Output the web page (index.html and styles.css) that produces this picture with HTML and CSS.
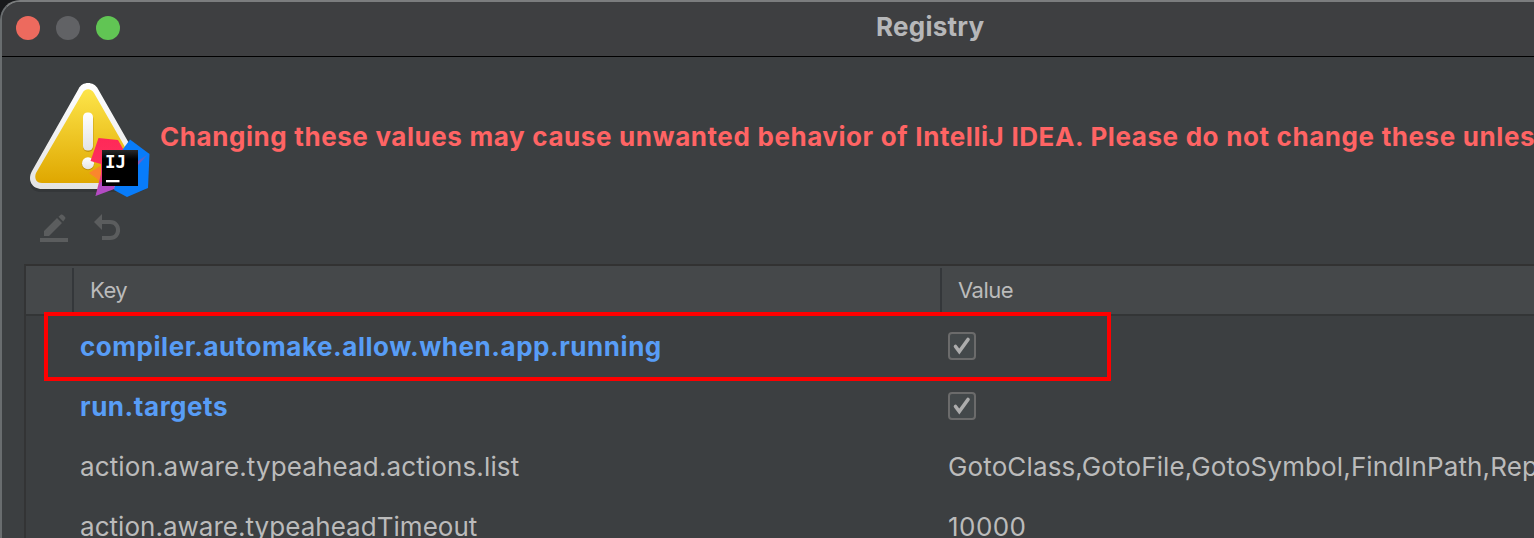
FILE: index.html
```html
<!DOCTYPE html>
<html lang="en">
<head>
<meta charset="utf-8">
<title>Registry</title>
<link rel="stylesheet" href="styles.css">
</head>
<body>
<div class="window">
  <header class="titlebar">
    <div class="lights"><span class="light close"></span><span class="light minimize"></span><span class="light expand"></span></div>
    <h1 class="title">Registry</h1>
  </header>
  <div class="warning">
    <svg class="warning-icon" width="128" height="128" viewBox="0 0 128 128">
      <defs>
        <linearGradient id="yellow" x1="0" y1="0" x2="0" y2="1"><stop offset="0" stop-color="#fde54a"/><stop offset="1" stop-color="#dfa700"/></linearGradient>
        <linearGradient id="white" x1="0" y1="0" x2="0" y2="1"><stop offset="0" stop-color="#fff"/><stop offset="1" stop-color="#e3e3e3"/></linearGradient>
        <linearGradient id="pink" x1="0" y1="0" x2="0" y2="1"><stop offset="0" stop-color="#ff2858"/><stop offset=".5" stop-color="#fe315d"/><stop offset="1" stop-color="#b34bc4"/></linearGradient>
        <linearGradient id="box" x1="0" y1="0" x2="0" y2="1"><stop offset="0" stop-color="#292929"/><stop offset=".25" stop-color="#000"/></linearGradient>
        <linearGradient id="facet" x1="0" y1="1" x2="1" y2="0"><stop offset="0" stop-color="#9851aa"/><stop offset="1" stop-color="#087cfa"/></linearGradient>
      </defs>
      <path class="triangle-shadow" d="M57 10 Q64-1 71 10L123 97Q127 110 113 111H15Q3 109 7 95Z" transform="translate(0 2)"/>
      <path d="M54.500 10C58 2 70 2 74 10L122 94C127 103 121 110 113 110H18C8 110 3 101 8 92Z" fill="url(#white)"/>
      <path d="M58.500 14C61 9 67 9 70 14L117 96C119 100 117 104 112 104H18C12 104 10 99 12 94Z" fill="url(#yellow)"/>
      <rect class="mark-shadow" x="59" y="35" width="10.500" height="38" rx="5"/>
      <rect x="59" y="33.500" width="10" height="38" rx="4.500" fill="url(#white)"/>
      <ellipse class="mark-shadow" cx="64" cy="85.300" rx="6.200" ry="6"/>
      <circle cx="64" cy="84.300" r="6" fill="url(#white)"/>
      <path d="M65 94L76 87L79 106L72 99Z" fill="#fb862d"/>
      <path d="M74.500 59L94 61L102 75L80 98V106L71.500 117L77 95V85L66.500 82Z" fill="url(#pink)"/>
      <path d="M77 103L86 104L93 109L71.500 117Z" fill="#b34bc4"/>
      <path d="M106 60.500L125.500 75L124 109L103 118L90 111L99 70Z" fill="#087cfa"/>
      <path d="M125.500 74L114 82V86Z" fill="url(#facet)"/>
      <rect x="78" y="71" width="36" height="36" fill="url(#box)"/>
      <text class="logo-text" x="81" y="88.500" textLength="21" lengthAdjust="spacingAndGlyphs">IJ</text>
      <rect x="82" y="101" width="13.500" height="2.300" fill="#fff"/>
    </svg>
    <p class="warning-text">Changing these values may cause unwanted behavior of IntelliJ IDEA. Please do not change these unless</p>
  </div>
  <div class="toolbar">
    <svg width="28" height="28" viewBox="0 0 28 28"><path d="M0 24H28V28H0ZM4 17V22H9L22 9L17 4ZM18.500 2.700L21 .6Q22 0 23 1L25 3Q26 4 25 5L23.200 7.400Z"/></svg>
    <svg width="28" height="28" viewBox="0 0 28 28"><path d="M0 8L8 0V6H16C29.500 6 29.500 26 16 26H8V22H16C24 22 24 10 16 10H8V16Z"/></svg>
  </div>
  <div class="table">
    <div class="row head"><div class="cell"></div><div class="cell">Key</div><div class="cell">Value</div></div>
    <div class="row changed"><div class="key">compiler.automake.allow.when.app.running</div><div class="value"><span class="check"><svg width="28" height="28" viewBox="0 0 28 28"><path d="M7.500 14.500L11.300 19.500L20 7.500"/></svg></span></div></div>
    <div class="row changed"><div class="key">run.targets</div><div class="value"><span class="check"><svg width="28" height="28" viewBox="0 0 28 28"><path d="M7.500 14.500L11.300 19.500L20 7.500"/></svg></span></div></div>
    <div class="row listing"><div class="key">action.aware.typeahead.actions.list</div><div class="value">GotoClass,GotoFile,GotoSymbol,FindInPath,ReplaceInPath</div></div>
    <div class="row"><div class="key">action.aware.typeaheadTimeout</div><div class="value number">10000</div></div>
  </div>
</div>
<div class="highlight"></div>
</body>
</html>
```
FILE: styles.css
```css
* { box-sizing: border-box; }
html, body { height: 538px; margin: 0; overflow: hidden; }
body { background: #18191b; font-family: Inter, "Noto Sans", sans-serif; color: #bbb; }
.window { height: 560px; border-top: 2px solid #7b7d7e; border-left: 2px solid #696d6f; border-top-left-radius: 20px; background: #3c3f41; overflow: hidden; }
.titlebar { display: grid; grid-template-columns: 326px 1fr; height: 55px; background: #3e3f41; border-bottom: 1px solid #000; }
.lights { display: flex; gap: 16px; padding: 14px 0 0 14px; }
.light { width: 24px; height: 24px; border-radius: 50%; }
.close { background: #ed6a5e; }
.minimize { background: #616265; }
.expand { background: #61c554; }
.title { margin: 0; padding-left: 548px; font-size: 26px; line-height: 50px; font-weight: 700; letter-spacing: .25px; color: #b6b7b9; }
.warning { display: flex; height: 145px; padding: 23px 0 0 22px; }
.warning-icon { flex: none; display: block; margin-top: -1px; }
.triangle-shadow { fill: #25272a; opacity: .35; }
.mark-shadow { fill: #a87c0c; opacity: .6; }
.logo-text { font: bold 18px "DejaVu Sans Mono", monospace; fill: #fff; }
.warning-text { margin: 0; padding: 37px 0 0 8px; font-size: 26px; line-height: 40px; font-weight: 700; letter-spacing: .55px; word-spacing: .4px; color: #ff6464; white-space: nowrap; }
.toolbar { display: flex; gap: 26px; height: 62px; padding: 12px 0 0 38px; fill: #5b5d5e; }
.table { margin-left: 22px; border-left: 2px solid #333435; border-top: 2px solid #323232; }
.row { display: grid; grid-template-columns: 914px 1fr; height: 60px; align-items: center; font-size: 26px; letter-spacing: .03px; white-space: nowrap; }
.head { grid-template-columns: 46px 868px 1fr; height: 50px; padding-top: 2px; align-items: stretch; background: #45484a; border-bottom: 2px solid #333536; font-size: 22px; line-height: 45px; letter-spacing: -.5px; }
.head .cell + .cell { border-left: 2px solid #34373a; padding-left: 16px; }
.changed { font-weight: 700; letter-spacing: .54px; color: #589df6; }
.listing { letter-spacing: .13px; }
.number { letter-spacing: .45px; }
.key { padding-left: 54px; }
.value { padding-left: 8px; }
.check { display: block; width: 28px; height: 28px; border: 2px solid #6b6b6b; border-radius: 4px; background: #43484a; }
.check svg { display: block; margin: -2px; fill: none; stroke: #acacac; stroke-width: 3.6; stroke-linecap: round; }
.highlight { position: absolute; left: 44px; top: 312px; width: 1067px; height: 69px; border: 4px solid #f00; }
```
